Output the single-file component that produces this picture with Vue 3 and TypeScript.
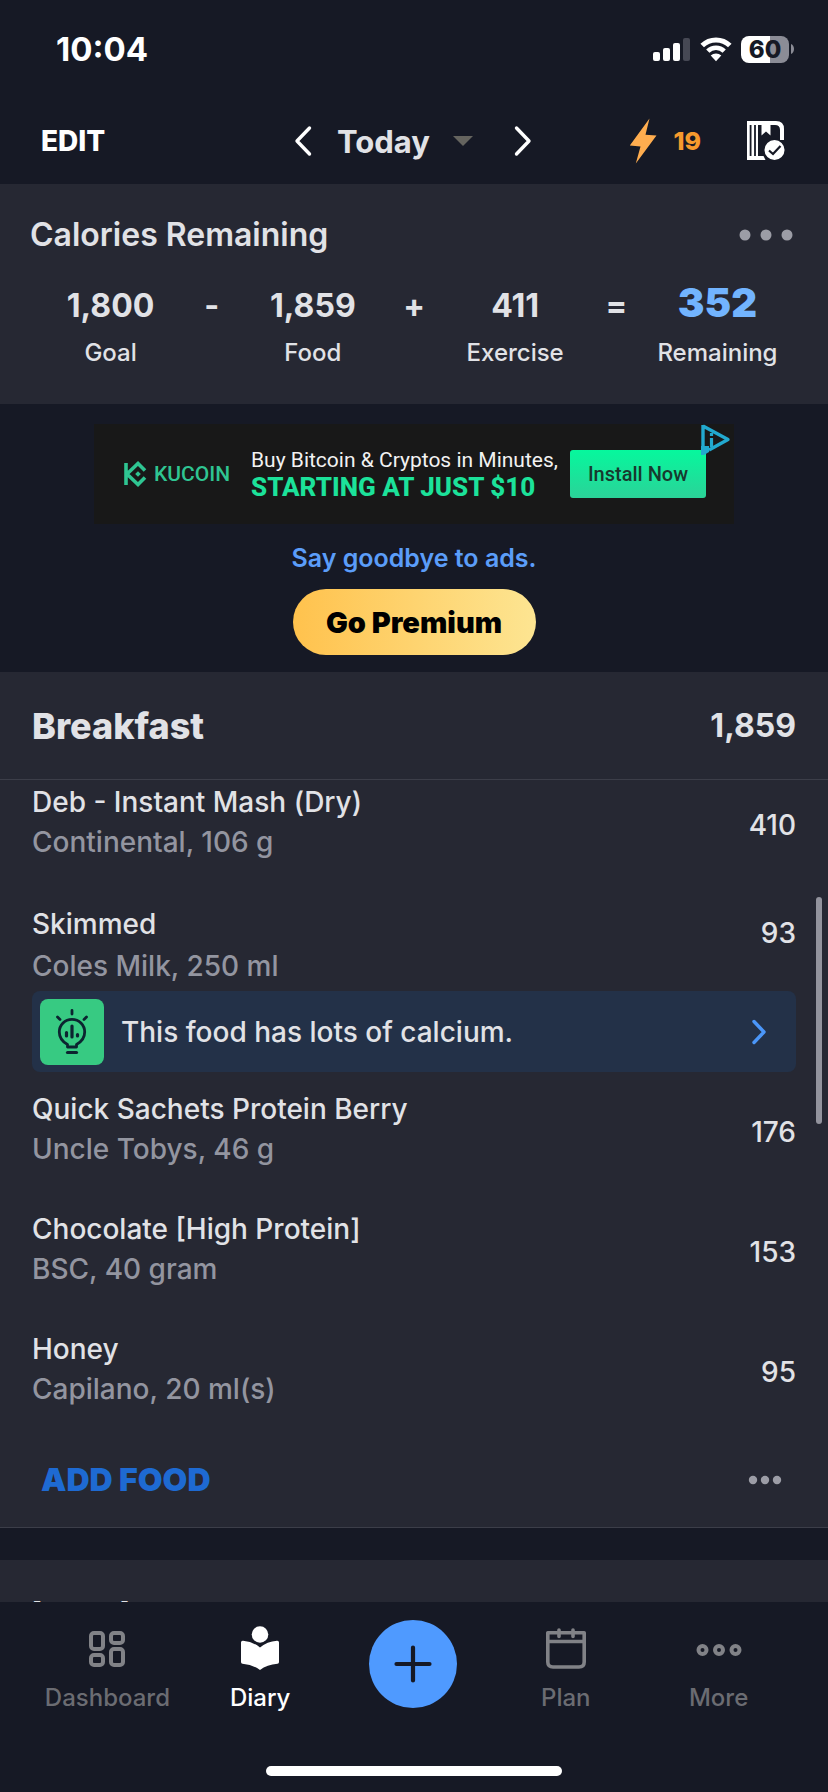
<script setup lang="ts">
interface SummaryCell {
  value: string
  label?: string
  highlight?: boolean
}

interface Food {
  name: string
  detail: string
  calories: number
  tip?: string
}

const summary: SummaryCell[] = [
  { value: '1,800', label: 'Goal' },
  { value: '-' },
  { value: '1,859', label: 'Food' },
  { value: '+' },
  { value: '411', label: 'Exercise' },
  { value: '=' },
  { value: '352', label: 'Remaining', highlight: true },
]

const foods: Food[] = [
  { name: 'Deb - Instant Mash (Dry)', detail: 'Continental, 106 g', calories: 410 },
  { name: 'Skimmed', detail: 'Coles Milk, 250 ml', calories: 93, tip: 'This food has lots of calcium.' },
  { name: 'Quick Sachets Protein Berry', detail: 'Uncle Tobys, 46 g', calories: 176 },
  { name: 'Chocolate [High Protein]', detail: 'BSC, 40 gram', calories: 153 },
  { name: 'Honey', detail: 'Capilano, 20 ml(s)', calories: 95 },
]
</script>

<template>
  <div class="screen">
    <div class="status">
      <span class="clock">10:04</span>
      <div class="status-icons">
        <svg width="38" height="24" viewBox="0 0 38 24" aria-hidden="true">
          <rect x="0" y="15" width="7" height="9" rx="2" fill="#fff" />
          <rect x="10" y="11" width="7" height="13" rx="2" fill="#fff" />
          <rect x="20" y="6" width="7" height="18" rx="2" fill="#fff" />
          <rect x="30" y="1" width="7" height="23" rx="2" fill="#464854" />
        </svg>
        <svg width="34" height="26" viewBox="0 0 34 26" aria-hidden="true">
          <path d="M3.2 9.6A19.5 19.5 0 0 1 30.8 9.6" fill="none" stroke="#fff" stroke-width="5" />
          <path d="M8.8 15.2A11.6 11.6 0 0 1 25.2 15.2" fill="none" stroke="#fff" stroke-width="4.6" />
          <path d="M17 25.2L11.7 19.6A7.5 7.5 0 0 1 22.3 19.6Z" fill="#fff" />
        </svg>
        <div class="battery">
          <span class="battery-level">60</span>
          <svg width="4" height="10" viewBox="0 0 4 10" aria-hidden="true"><path d="M0 0C4 1.5 4 8.5 0 10Z" fill="#8b8c96" /></svg>
        </div>
      </div>
    </div>

    <header class="topbar">
      <button class="edit" type="button">EDIT</button>
      <div class="day">
        <button type="button" aria-label="Previous day">
          <svg width="20" height="32" viewBox="0 0 20 32" aria-hidden="true"><path d="M16.5 3L4 16L16.5 29" fill="none" stroke="#fff" stroke-width="3.4" stroke-linecap="round" stroke-linejoin="round" /></svg>
        </button>
        <button class="today" type="button">
          Today
          <svg width="20" height="10" viewBox="0 0 20 10" aria-hidden="true"><path d="M0 0H20L10 10Z" fill="#65645f" /></svg>
        </button>
        <button type="button" aria-label="Next day">
          <svg width="20" height="32" viewBox="0 0 20 32" aria-hidden="true"><path d="M3.5 3L16 16L3.5 29" fill="none" stroke="#fff" stroke-width="3.4" stroke-linecap="round" stroke-linejoin="round" /></svg>
        </button>
      </div>
      <div class="top-actions">
        <button class="streak" type="button">
          <svg width="28" height="46" viewBox="0 0 28 46" aria-hidden="true"><path d="M20.5 .5L.8 27.5L11.5 28.5L6.8 45.5L27.5 17.5L16.5 16.8Z" fill="#ffad4f" /></svg>
          19
        </button>
        <button type="button" aria-label="Complete diary">
          <svg width="38" height="40" viewBox="0 0 38 40" aria-hidden="true">
            <path d="M0 0H29Q37 0 37 8V19H33V9Q33 4 28 4H23.5V14.5L19 10.5L14.5 14.5V4H11V35H16.5L18.5 39H0Z" fill="#fff" />
            <path d="M3.6 4V35M8 4V35" stroke="#161925" stroke-width="1.8" fill="none" />
            <circle cx="27.5" cy="29" r="10.8" fill="#fff" stroke="#161925" stroke-width="1.5" />
            <path d="M22 29.5L26 33L33.5 25" fill="none" stroke="#161925" stroke-width="2.2" />
          </svg>
        </button>
      </div>
    </header>

    <main class="content">
      <section class="summary">
        <div class="summary-head">
          <h2>Calories Remaining</h2>
          <button type="button" aria-label="Summary options">
            <svg width="54" height="12" viewBox="0 0 54 12" aria-hidden="true" fill="#9c9da6"><circle cx="6" cy="6" r="5.5" /><circle cx="27" cy="6" r="5.5" /><circle cx="48" cy="6" r="5.5" /></svg>
          </button>
        </div>
        <div class="equation">
          <div v-for="(cell, i) in summary" :key="i" class="cell">
            <span class="value" :class="{ highlight: cell.highlight }">{{ cell.value }}</span>
            <span v-if="cell.label" class="label">{{ cell.label }}</span>
          </div>
        </div>
      </section>

      <section class="promo">
        <div class="ad">
          <div class="brand">
            <svg width="24" height="26" viewBox="0 0 24 26" aria-hidden="true">
              <path d="M2 2V24M3 13L14 2.5L21 9.5M3 13L14 23.5L21 16.5" fill="none" stroke="#2fc592" stroke-width="3.6" />
              <path d="M14 10.2L16.8 13L14 15.8L11.2 13Z" fill="#2fc592" />
            </svg>
            <span>KUCOIN</span>
          </div>
          <div class="pitch">
            <span class="pitch-top">Buy Bitcoin &amp; Cryptos in Minutes,</span>
            <span class="pitch-bottom">STARTING AT JUST $10</span>
          </div>
          <button class="install" type="button">Install Now</button>
          <a class="adchoices" href="#" aria-label="Ad choices">
            <svg width="30" height="32" viewBox="0 0 30 32" aria-hidden="true">
              <path d="M2 2L27 15.5L8 26M2 1V29" fill="none" stroke="#22a9cf" stroke-width="3.4" stroke-linejoin="round" />
              <path d="M0 22H8V28L3 31H0Z" fill="#22a9cf" />
              <path d="M10.5 9V12M10.5 14V23" stroke="#22a9cf" stroke-width="3.2" />
            </svg>
          </a>
        </div>
        <a class="goodbye" href="#">Say goodbye to ads.</a>
        <button class="premium" type="button">Go Premium</button>
      </section>

      <section class="meal">
        <div class="meal-head">
          <h2>Breakfast</h2>
          <span class="total">1,859</span>
        </div>
        <ul class="foods">
          <li v-for="food in foods" :key="food.name">
            <div class="food" :class="{ compact: food.tip }">
              <div class="food-text">
                <div class="name">{{ food.name }}</div>
                <div class="detail">{{ food.detail }}</div>
              </div>
              <div class="calories">{{ food.calories }}</div>
            </div>
            <button v-if="food.tip" class="tip" type="button">
              <span class="tip-icon">
                <svg width="34" height="46" viewBox="0 0 34 46" aria-hidden="true" fill="none" stroke="#0c2430" stroke-width="2.8" stroke-linecap="round">
                  <path d="M17 1.5V5M2.5 8L5 10.5M31.5 8L29 10.5" />
                  <path d="M12.5 38V35.5C8 33 4.3 29 4.3 23A12.7 12.7 0 0 1 29.7 23C29.7 29 26 33 21.5 35.5V38Z" stroke-linejoin="round" />
                  <path d="M11.5 23.5V27M17 17V28M22.5 25.5V27" stroke-width="3.2" />
                  <path d="M12.5 43.5H21.5" stroke-width="3.2" />
                </svg>
              </span>
              <span class="tip-text">{{ food.tip }}</span>
              <svg width="18" height="28" viewBox="0 0 18 28" aria-hidden="true"><path d="M4 3.5L14 14L4 24.5" fill="none" stroke="#4b96f8" stroke-width="3.4" stroke-linecap="round" stroke-linejoin="round" /></svg>
            </button>
          </li>
        </ul>
        <div class="meal-foot">
          <button class="add" type="button">ADD FOOD</button>
          <button type="button" aria-label="Breakfast options">
            <svg width="34" height="10" viewBox="0 0 34 10" aria-hidden="true" fill="#9c9da6"><circle cx="5" cy="5" r="4.2" /><circle cx="17" cy="5" r="4.2" /><circle cx="29" cy="5" r="4.2" /></svg>
          </button>
        </div>
      </section>

      <section class="meal">
        <div class="meal-head">
          <h2>Lunch</h2>
        </div>
      </section>
      <div class="scrollbar"></div>
    </main>

    <nav class="tabbar">
      <div class="tabs">
        <a class="tab" href="#">
          <svg width="44" height="44" viewBox="0 0 44 44" aria-hidden="true" fill="none" stroke="#818287" stroke-width="4">
            <rect x="6" y="7" width="12" height="16" rx="3" />
            <rect x="26" y="7" width="12" height="10" rx="3" />
            <rect x="6" y="29" width="12" height="10" rx="3" />
            <rect x="26" y="23" width="12" height="16" rx="3" />
          </svg>
          Dashboard
        </a>
        <a class="tab active" href="#" aria-current="page">
          <svg width="44" height="44" viewBox="0 0 44 44" aria-hidden="true" fill="#fff">
            <circle cx="22" cy="8.5" r="8.3" />
            <path d="M3 16.5Q3 14.5 5 14.7Q15 15.5 22 21.5Q29 15.5 39 14.7Q41 14.5 41 16.5V36Q41 37.5 39.5 37.7Q29 38.5 22 44Q15 38.5 4.5 37.7Q3 37.5 3 36Z" />
          </svg>
          Diary
        </a>
        <button class="plus" type="button" aria-label="Add entry">
          <svg width="40" height="40" viewBox="0 0 40 40" aria-hidden="true"><path d="M20 3.5V36.5M3.5 20H36.5" stroke="#161925" stroke-width="4.2" stroke-linecap="round" /></svg>
        </button>
        <a class="tab" href="#">
          <svg width="44" height="44" viewBox="0 0 44 44" aria-hidden="true" fill="none" stroke="#818287" stroke-width="3.6">
            <path d="M3.8 6.8H40.2V36Q40.2 41 35 41H9Q3.8 41 3.8 36ZM3.8 15.5H40.2" stroke-linejoin="round" />
            <path d="M15 4V10.5M29 4V10.5" stroke-linecap="round" />
          </svg>
          Plan
        </a>
        <a class="tab" href="#">
          <svg width="46" height="44" viewBox="0 0 46 44" aria-hidden="true" fill="none" stroke="#818287" stroke-width="4">
            <circle cx="6.5" cy="24" r="4" /><circle cx="23" cy="24" r="4" /><circle cx="39.5" cy="24" r="4" />
          </svg>
          More
        </a>
      </div>
      <div class="home-bar"></div>
    </nav>
  </div>
</template>

<style>
body {
  margin: 0;
  background: #161925;
}
</style>

<style scoped>
.screen {
  display: flex;
  flex-direction: column;
  height: 100vh;
  background: #161925;
  color: #e1e2e6;
  font-family: Inter, "Liberation Sans", sans-serif;
  font-size: 28px;
  font-weight: 500;
}

button {
  display: flex;
  align-items: center;
  margin: 0;
  padding: 0;
  border: 0;
  background: none;
  color: inherit;
  font: inherit;
  cursor: pointer;
}

a {
  color: inherit;
  text-decoration: none;
}

svg {
  display: block;
  flex: none;
}

h2 {
  margin: 0;
}

.status {
  display: flex;
  flex: none;
  align-items: center;
  justify-content: space-between;
  height: 98px;
  padding: 0 33px 0 56px;
}

.clock {
  color: #fff;
  font-size: 33px;
  font-weight: 700;
}

.status-icons {
  display: flex;
  align-items: center;
  gap: 8px;
}

.battery {
  display: flex;
  align-items: center;
  gap: 2px;
}

.battery-level {
  width: 48px;
  border-radius: 8px;
  background: linear-gradient(90deg, #fff 60%, #8b8c96 60%);
  color: #161925;
  font-size: 24px;
  font-weight: 800;
  line-height: 27px;
  text-align: center;
}

.topbar {
  display: grid;
  flex: none;
  grid-template-columns: 1fr auto 1fr;
  align-items: center;
  height: 86px;
  padding: 0 43px 0 41px;
}

.edit {
  color: #fff;
  font-weight: 800;
}

.day {
  display: flex;
  align-items: center;
  gap: 24px;
}

.day > button:last-child {
  margin-left: 16px;
}

.today {
  gap: 23px;
  font-size: 31px;
  font-weight: 700;
}

.top-actions {
  display: flex;
  align-items: center;
  justify-content: flex-end;
  gap: 46px;
}

.streak {
  gap: 16px;
  color: #f69a2d;
  font-size: 25px;
  font-weight: 800;
}

.content {
  position: relative;
  flex: 1;
  min-height: 0;
  overflow: hidden;
}

.summary {
  padding: 31px 0 35px;
  background: #262833;
}

.summary-head {
  display: flex;
  justify-content: space-between;
  padding: 0 35px 0 30px;
  line-height: 40px;
}

.summary-head h2 {
  font-size: 32px;
  font-weight: 600;
}

.equation {
  display: grid;
  grid-template-columns: repeat(7, minmax(0, 1fr));
  margin-top: 28px;
  padding: 0 60px;
}

.cell {
  display: flex;
  flex-direction: column;
  align-items: center;
  gap: 8px;
  white-space: nowrap;
}

.value {
  font-size: 32px;
  font-weight: 700;
  line-height: 46px;
}

.value.highlight {
  padding-bottom: 6px;
  color: #72b4ff;
  font-size: 40px;
  font-weight: 900;
  line-height: 40px;
}

.label {
  font-size: 24px;
  line-height: 32px;
}

.promo {
  display: flex;
  flex-direction: column;
  align-items: center;
  padding: 20px 0 17px;
}

.ad {
  position: relative;
  display: flex;
  box-sizing: border-box;
  align-items: center;
  width: 640px;
  max-width: 100%;
  height: 100px;
  padding: 0 28px 0 30px;
  background: #181818;
  font-family: Roboto, sans-serif;
  white-space: nowrap;
}

.brand {
  display: flex;
  flex: none;
  align-items: center;
  gap: 6px;
  width: 127px;
  color: #2fc592;
  font-size: 21px;
}

.pitch {
  display: flex;
  flex: 1;
  flex-direction: column;
}

.pitch-top {
  color: #f2f2f2;
  font-size: 21px;
  font-weight: 400;
  line-height: 26px;
}

.pitch-bottom {
  color: #1ce29a;
  font-size: 26px;
  font-weight: 800;
  line-height: 28px;
}

.install {
  justify-content: center;
  width: 136px;
  height: 48px;
  border-radius: 3px;
  background: linear-gradient(#06f89d, #2bd298);
  color: #17392e;
  font-size: 20px;
}

.adchoices {
  position: absolute;
  top: 0;
  right: 3px;
}

.goodbye {
  margin-top: 18px;
  color: #5b9df9;
  font-size: 25px;
  font-weight: 600;
  line-height: 32px;
}

.premium {
  justify-content: center;
  width: 243px;
  height: 66px;
  margin-top: 15px;
  border-radius: 33px;
  background: linear-gradient(90deg, #ffc24d, #fde592);
  color: #000;
  font-size: 29px;
  font-weight: 900;
}

.meal {
  margin-bottom: 32px;
  background: #262833;
}

.meal-head {
  position: relative;
  z-index: 1;
  display: flex;
  align-items: center;
  justify-content: space-between;
  height: 107px;
  padding: 0 32px;
  border-bottom: 1px solid #3c3e49;
  background: #262833;
}

.meal-head h2 {
  font-size: 36px;
  font-weight: 800;
}

.total {
  font-size: 32px;
  font-weight: 700;
}

.foods {
  margin: -15px 0 0;
  padding: 0 32px;
  list-style: none;
}

.food {
  display: flex;
  align-items: center;
  justify-content: space-between;
}

.food-text {
  padding: 17px 0 23px;
  line-height: 40px;
}

.compact .food-text {
  padding: 18px 0 4px;
  line-height: 42px;
}

.compact .calories {
  padding-bottom: 10px;
}

.detail {
  color: #9395a0;
}

.tip {
  box-sizing: border-box;
  width: 100%;
  height: 81px;
  padding: 0 28px 0 8px;
  border-radius: 8px;
  background: #233148;
}

.tip-icon {
  display: flex;
  align-items: center;
  justify-content: center;
  width: 64px;
  height: 66px;
  border-radius: 8px;
  background: #37ca82;
}

.tip-text {
  flex: 1;
  padding-left: 17px;
  text-align: left;
}

.meal-foot {
  display: flex;
  align-items: center;
  justify-content: space-between;
  height: 95px;
  padding: 0 46px 0 41px;
  border-bottom: 1px solid #3c3e49;
}

.add {
  color: #1e6ad2;
  font-size: 32px;
  font-weight: 900;
}

.scrollbar {
  position: absolute;
  top: 713px;
  right: 6px;
  width: 6px;
  height: 227px;
  border-radius: 3px;
  background: #92939d;
}

.tabbar {
  flex: none;
  padding-bottom: 16px;
}

.tabs {
  display: grid;
  grid-template-columns: repeat(5, minmax(0, 1fr));
  padding: 0 33px 0 31px;
}

.tab {
  display: flex;
  flex-direction: column;
  align-items: center;
  gap: 12px;
  padding-top: 24px;
  color: #6b6c72;
  font-size: 24px;
  line-height: 32px;
}

.tab.active {
  color: #fff;
}

.plus {
  justify-content: center;
  justify-self: center;
  width: 88px;
  height: 88px;
  margin-top: 18px;
  border-radius: 50%;
  background: #4f9aff;
}

.home-bar {
  width: 296px;
  height: 10px;
  margin: 52px auto 0;
  border-radius: 5px;
  background: #fff;
}
</style>
